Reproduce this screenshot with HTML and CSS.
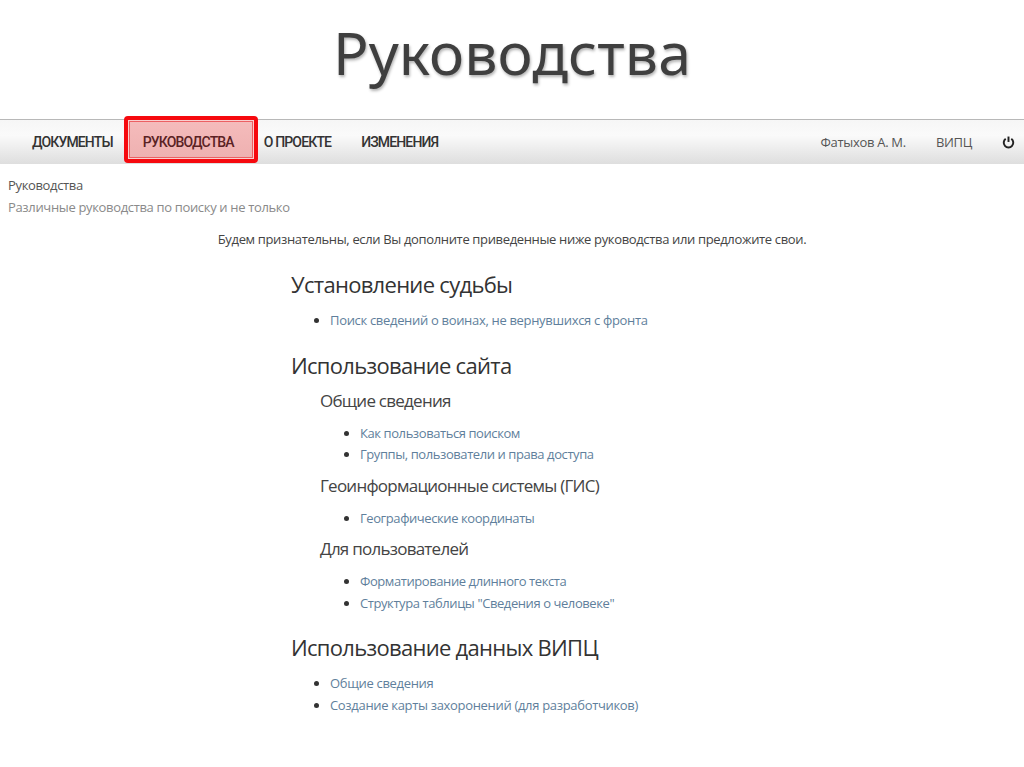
FILE: index.html
```html
<!DOCTYPE html>
<html lang="ru">
<head>
<meta charset="utf-8">
<title>Руководства</title>
<link rel="stylesheet" href="styles.css">
</head>
<body>
<h1 class="slide-title">Руководства</h1>
<nav class="nav">
  <div class="nav-left">
    <a class="nav-item">ДОКУМЕНТЫ</a>
    <a class="nav-item nav-active">РУКОВОДСТВА</a>
    <a class="nav-item">О ПРОЕКТЕ</a>
    <a class="nav-item">ИЗМЕНЕНИЯ</a>
  </div>
  <div class="nav-right">
    <a class="nav-user">Фатыхов А. М.</a>
    <a class="nav-user">ВИПЦ</a>
    <svg class="power" viewBox="0 0 12 12" width="13" height="13"><path d="M3.4 2.6a4.4 4.4 0 1 0 5.2 0" fill="none" stroke="#222" stroke-width="1.8"/><path d="M6 .5v5" fill="none" stroke="#222" stroke-width="1.8"/></svg>
  </div>
</nav>
<header class="crumbs">
  <div class="crumb-title">Руководства</div>
  <div class="crumb-sub">Различные руководства по поиску и не только</div>
</header>
<p class="intro">Будем признательны, если Вы дополните приведенные ниже руководства или предложите свои.</p>
<main class="content">
  <h2 class="h-main">Установление судьбы</h2>
  <ul class="links"><li><a>Поиск сведений о воинах, не вернувшихся с фронта</a></li></ul>
  <h2 class="h-main">Использование сайта</h2>
  <section class="sub">
    <h3 class="h-sub">Общие сведения</h3>
    <ul class="links"><li><a>Как пользоваться поиском</a></li><li><a>Группы, пользователи и права доступа</a></li></ul>
    <h3 class="h-sub">Геоинформационные системы (ГИС)</h3>
    <ul class="links"><li><a>Географические координаты</a></li></ul>
    <h3 class="h-sub">Для пользователей</h3>
    <ul class="links"><li><a>Форматирование длинного текста</a></li><li><a>Структура таблицы "Сведения о человеке"</a></li></ul>
  </section>
  <h2 class="h-main">Использование данных ВИПЦ</h2>
  <ul class="links"><li><a>Общие сведения</a></li><li><a>Создание карты захоронений (для разработчиков)</a></li></ul>
</main>
</body>
</html>
```
FILE: styles.css
```css
* { box-sizing: border-box; }
html, body { margin: 0; padding: 0; }
body {
  width: 1024px;
  height: 767px;
  overflow: hidden;
  background: #fff;
  font-family: "Open Sans", "Noto Sans", sans-serif;
  color: #444;
}
.slide-title {
  margin: 0;
  height: 119px;
  padding-top: 13px;
  text-align: center;
  font-family: "Noto Sans", sans-serif;
  font-weight: 400;
  font-size: 59px;
  line-height: 78px;
  letter-spacing: .1px;
  color: #3f3f3f;
  text-shadow: 1px 2px 3px rgba(0,0,0,.3);
}
.nav {
  height: 45px;
  border-top: 1px solid #b8b8b8;
  background: linear-gradient(#f6f6f6 0%, #fafafa 35%, #dedede 100%);
  display: flex;
  justify-content: space-between;
  align-items: center;
  padding-left: 32px;
  padding-right: 9px;
}
.nav-left { display: flex; align-items: center; }
.nav-item {
  font-family: Roboto, sans-serif;
  font-size: 14px;
  color: #333;
  font-weight: 500;
  letter-spacing: -.85px;
  white-space: nowrap;
  margin-right: 30px;
}
.nav-active {
  margin-left: -19px;
  margin-right: 6px;
  margin-bottom: 6px;
  padding: 5px 20px 0 15px;
  height: 47px;
  line-height: 34px;
  border: 4px solid #f6090e;
  border-radius: 4px;
  background: linear-gradient(#f5bcbc, #eeb0b0);
  box-shadow: inset 0 0 0 1px #f9cfcf, inset 0 0 0 2px #ec6063;
  color: #5a2224;
}
.nav-right { display: flex; align-items: center; }
.nav-user {
  font-size: 13px;
  color: #555;
  letter-spacing: -.3px;
  margin-right: 30px;
  white-space: nowrap;
}
.power { display: block; }
.crumbs { padding: 10px 8px 0; }
.crumb-title { font-size: 13px; line-height: 22px; color: #555; letter-spacing: -.35px; }
.crumb-sub { font-size: 13px; line-height: 22px; color: #8a8a8a; letter-spacing: -.34px; }
.intro {
  margin: 10px 0 0;
  text-align: center;
  font-size: 13px;
  line-height: 22px;
  color: #444;
  letter-spacing: -.35px;
}
.content { padding-left: 291px; margin-top: 18px; }
.h-main {
  margin: 0;
  font-weight: 400;
  font-size: 22px;
  line-height: 32px;
  color: #333;
  letter-spacing: -.7px;
}
.h-sub {
  margin: 0;
  font-weight: 400;
  font-size: 17px;
  line-height: 26px;
  color: #444;
  letter-spacing: -.75px;
}
.sub { padding-left: 29px; padding-top: 7px; margin-bottom: 17px; }
.links {
  margin: 0;
  padding: 10px 0 0 39px;
  list-style: disc;
  font-size: 13px;
  line-height: 21.5px;
  color: #333;
}
.links a { color: #5f7f9c; letter-spacing: -.32px; }
.content > .links { margin-bottom: 17px; }
.sub > .links { margin-bottom: 7px; padding-top: 9px; padding-left: 40px; }
.sub .links a { letter-spacing: -.42px; }
```
